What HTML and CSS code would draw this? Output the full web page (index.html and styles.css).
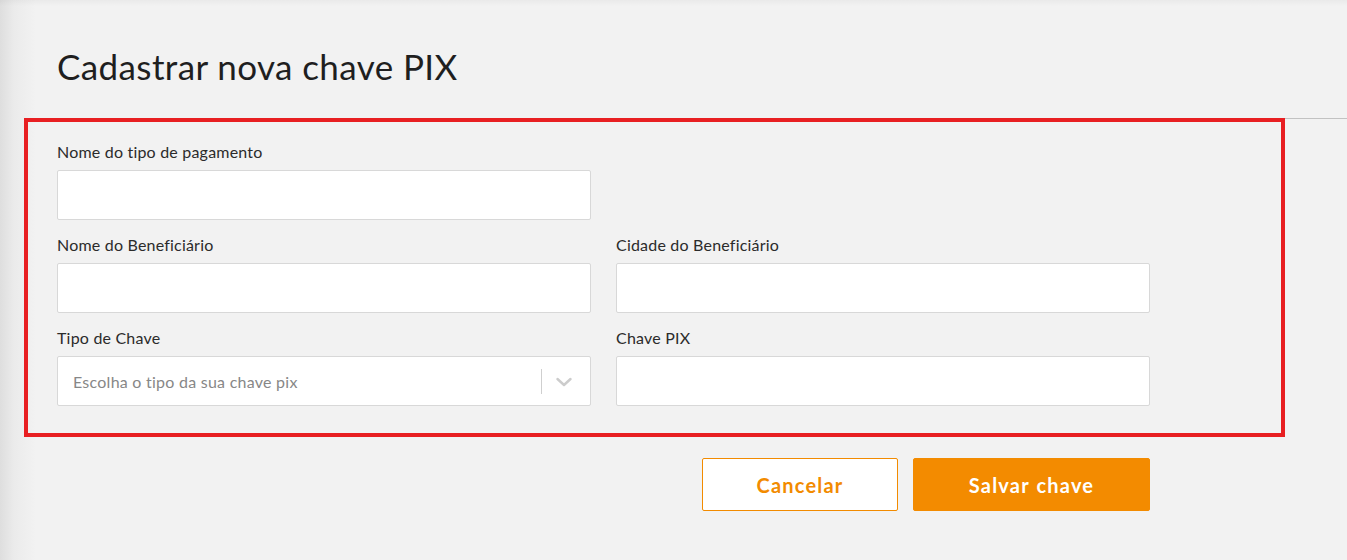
FILE: index.html
```html
<!DOCTYPE html>
<html lang="pt-BR">
<head>
<meta charset="utf-8">
<title>Cadastrar nova chave PIX</title>
<link rel="stylesheet" href="styles.css">
</head>
<body>
<div class="page">
  <header class="header">
    <h1 class="title">Cadastrar nova chave PIX</h1>
  </header>
  <section class="form-box">
    <div class="grid">
      <div class="field">
        <label class="label">Nome do tipo de pagamento</label>
        <input class="input" type="text">
      </div>
      <div class="field empty"></div>
      <div class="field">
        <label class="label">Nome do Beneficiário</label>
        <input class="input" type="text">
      </div>
      <div class="field">
        <label class="label">Cidade do Beneficiário</label>
        <input class="input" type="text">
      </div>
      <div class="field">
        <label class="label">Tipo de Chave</label>
        <div class="select">
          <span class="placeholder">Escolha o tipo da sua chave pix</span>
          <span class="sep"></span>
          <svg class="chev" width="16" height="10" viewBox="0 0 16 10"><path d="M1.5 2 L8 8 L14.5 2" fill="none" stroke="#cccccc" stroke-width="2.4" stroke-linecap="round" stroke-linejoin="round"/></svg>
        </div>
      </div>
      <div class="field">
        <label class="label">Chave PIX</label>
        <input class="input" type="text">
      </div>
    </div>
  </section>
  <div class="actions">
    <button class="btn btn-outline">Cancelar</button>
    <button class="btn btn-primary">Salvar chave</button>
  </div>
</div>
</body>
</html>
```
FILE: styles.css
```css
html, body {
  margin: 0;
  padding: 0;
}
body {
  width: 1347px;
  height: 560px;
  overflow: hidden;
  font-family: "Lato", "Open Sans", sans-serif;
  color: #222;
  background:
    linear-gradient(to bottom, rgba(0,0,0,0.035), rgba(0,0,0,0) 6px),
    linear-gradient(to right, #dedede 0, #ebebeb 14px, #f2f2f2 36px);
  background-color: #f2f2f2;
}
.page {
  display: flex;
  flex-direction: column;
}
.header {
  margin-left: 26px;
  height: 119px;
  border-bottom: 1px solid #c2c2c2;
  box-sizing: border-box;
  padding-left: 31px;
  padding-top: 44px;
}
.title {
  margin: 0;
  font-size: 35px;
  font-weight: 400;
  line-height: 44px;
  color: #1f1f1f;
  letter-spacing: 0.4px;
}
.form-box {
  margin-left: 24px;
  margin-top: -1px;
  width: 1261px;
  height: 319px;
  box-sizing: border-box;
  border: 4px solid #e81f22;
  padding: 20px 0 0 29px;
}
.grid {
  display: grid;
  grid-template-columns: 534px 534px;
  column-gap: 25px;
  row-gap: 15px;
}
.field {
  display: flex;
  flex-direction: column;
  gap: 8px;
}
.label {
  font-size: 16px;
  line-height: 20px;
  letter-spacing: 0.2px;
  color: #2b2b2b;
}
.input, .select {
  box-sizing: border-box;
  height: 50px;
  width: 534px;
  background: #fff;
  border: 1px solid #d8d8d8;
  border-radius: 2px;
  margin: 0;
  font-family: inherit;
}
.select {
  display: flex;
  align-items: center;
  padding-left: 15px;
}
.placeholder {
  flex: 1;
  font-size: 16px;
  letter-spacing: 0.25px;
  color: #878787;
}
.sep {
  width: 1px;
  height: 25px;
  background: #cfcfcf;
}
.chev {
  margin: 2px 18px 0 14px;
}
.actions {
  display: flex;
  gap: 15px;
  margin-top: 21px;
  margin-left: 702px;
}
.btn {
  height: 53px;
  box-sizing: border-box;
  border-radius: 2px;
  font-family: "Lato", sans-serif;
  font-weight: 700;
  font-size: 20px;
  letter-spacing: 1.2px;
  cursor: pointer;
}
.btn-outline {
  width: 196px;
  background: #fff;
  border: 1px solid #f28b00;
  color: #f28b00;
}
.btn-primary {
  width: 237px;
  background: #f38b00;
  border: 1px solid #f38b00;
  color: #fff;
  word-spacing: 1px;
}
```
